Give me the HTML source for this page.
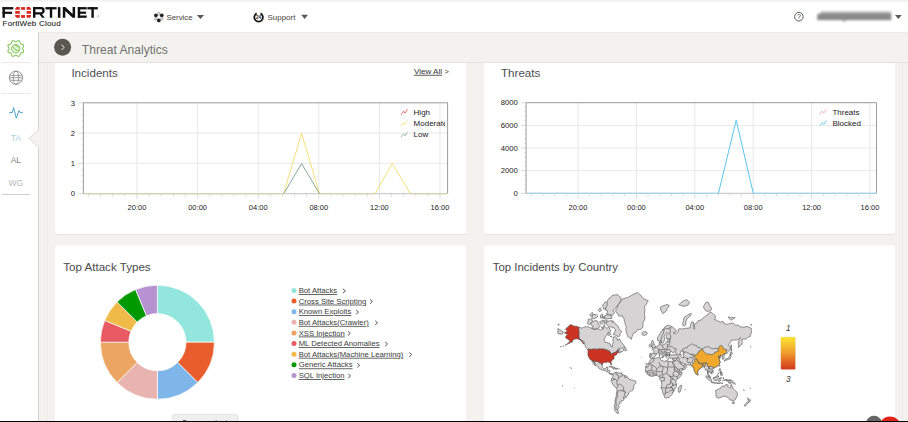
<!DOCTYPE html>
<html><head><meta charset="utf-8"><title>Threat Analytics</title>
<style>html,body{margin:0;padding:0;width:908px;height:422px;overflow:hidden;background:#fff} svg{display:block}</style>
</head><body><svg width="908" height="422" viewBox="0 0 908 422"><defs>
<linearGradient id="hdrsh" x1="0" y1="0" x2="0" y2="1"><stop offset="0" stop-color="#ebeae5"/><stop offset="1" stop-color="#f3f2ee"/></linearGradient>
<linearGradient id="topg" x1="0" y1="0" x2="0" y2="1"><stop offset="0" stop-color="#efefef"/><stop offset="1" stop-color="#ffffff"/></linearGradient>
<linearGradient id="scaleg" x1="0" y1="0" x2="0" y2="1"><stop offset="0" stop-color="#fde633"/><stop offset="0.5" stop-color="#ef9a2c"/><stop offset="1" stop-color="#d2361a"/></linearGradient>
<filter id="blur1" x="-20%" y="-100%" width="140%" height="300%"><feGaussianBlur stdDeviation="0.85"/></filter>
<clipPath id="clip1"><rect x="380" y="95" width="65" height="50"/></clipPath>
<clipPath id="clip2"><rect x="800" y="95" width="76" height="50"/></clipPath>
</defs><rect x="0" y="0" width="908" height="422" fill="#f3f2ee"/><rect x="0" y="0" width="908" height="32" fill="#ffffff"/><rect x="0" y="0" width="908" height="3" fill="url(#topg)"/><rect x="0" y="32" width="38" height="390" fill="#ffffff"/><rect x="38" y="32" width="1" height="390" fill="#d4d3ce"/><rect x="47" y="63" width="1" height="359" fill="#edece7"/><rect x="902" y="63" width="1" height="359" fill="#edece7"/><rect x="55" y="41" width="411" height="194" rx="3" fill="#e6e4de"/><rect x="55" y="40" width="411" height="194" rx="3" fill="#ffffff"/><rect x="484" y="41" width="411" height="194" rx="3" fill="#e6e4de"/><rect x="484" y="40" width="411" height="194" rx="3" fill="#ffffff"/><rect x="55" y="246.5" width="411" height="200" rx="3" fill="#e6e4de"/><rect x="55" y="245.5" width="411" height="200" rx="3" fill="#ffffff"/><rect x="484" y="246.5" width="411" height="200" rx="3" fill="#e6e4de"/><rect x="484" y="245.5" width="411" height="200" rx="3" fill="#ffffff"/><rect x="39" y="32" width="869" height="30" fill="#f3f2ee"/><rect x="39" y="32" width="869" height="2.5" fill="url(#hdrsh)"/><rect x="39" y="62" width="869" height="1" fill="#e3e2dd"/><rect x="2.5" y="7.1" width="2.4" height="10.700000000000001" fill="#111111"/><rect x="2.5" y="7.1" width="10.8" height="2.3" fill="#111111"/><rect x="2.5" y="11.7" width="9.6" height="2.2" fill="#111111"/><path d="M16.5 7.1 H19.8 V9.8 H15.2 V8.4 Z" fill="#da291c"/><rect x="21.1" y="7.1" width="3.90" height="2.70" fill="#da291c"/><path d="M26.6 7.1 H29.7 L31.0 8.4 V9.8 H26.6 Z" fill="#da291c"/><rect x="15.2" y="11.05" width="4.60" height="2.70" fill="#da291c"/><rect x="26.6" y="11.05" width="4.40" height="2.70" fill="#da291c"/><path d="M15.2 15.1 H19.8 V17.8 H16.5 L15.2 16.5 Z" fill="#da291c"/><rect x="21.1" y="15.1" width="3.90" height="2.70" fill="#da291c"/><path d="M26.6 15.1 H31.0 V16.5 L29.7 17.8 H26.6 Z" fill="#da291c"/><path d="M33 7.1 H41.5 Q44.6 7.1 44.6 10.2 V11.3 Q44.6 13.9 42 14.2 L44.8 17.8 H42.1 L39.6 14.4 H35.4 V17.8 H33 Z M35.4 9.3 V12.3 H41 Q42.2 12.3 42.2 11.2 V10.4 Q42.2 9.3 41 9.3 Z" fill="#111111" fill-rule="evenodd"/><rect x="45.4" y="7.1" width="11.2" height="2.3" fill="#111111"/><rect x="49.8" y="7.1" width="2.4" height="10.700000000000001" fill="#111111"/><rect x="57.9" y="7.1" width="2.5" height="10.700000000000001" fill="#111111"/><path d="M62.8 17.8 V7.1 H65.3 L72.6 14 V7.1 H75.1 V17.8 H72.6 L65.3 10.9 V17.8 Z" fill="#111111"/><rect x="77.8" y="7.1" width="2.4" height="10.700000000000001" fill="#111111"/><rect x="77.8" y="7.1" width="8.9" height="2.3" fill="#111111"/><rect x="77.8" y="11.6" width="8.3" height="2.2" fill="#111111"/><rect x="77.8" y="15.5" width="8.9" height="2.3" fill="#111111"/><rect x="87.4" y="7.1" width="10.4" height="2.3" fill="#111111"/><rect x="91.4" y="7.1" width="2.4" height="10.700000000000001" fill="#111111"/><circle cx="98.3" cy="16.2" r="0.9" fill="none" stroke="#888" stroke-width="0.4"/><text x="2.6" y="26.1" style="font-family:'Liberation Sans', sans-serif;font-size:8.0px;letter-spacing:0.2px" fill="#1e1e1e" stroke="#1e1e1e" stroke-width="0.1">FortiWeb Cloud</text><circle cx="158.80" cy="13.60" r="1.2" fill="none" stroke="#8a8a8a" stroke-width="0.8"/><circle cx="161.74" cy="15.30" r="1.85" fill="#222"/><circle cx="161.74" cy="18.70" r="1.2" fill="none" stroke="#8a8a8a" stroke-width="0.8"/><circle cx="158.80" cy="20.40" r="1.85" fill="#222"/><circle cx="155.86" cy="18.70" r="1.2" fill="none" stroke="#8a8a8a" stroke-width="0.8"/><circle cx="155.86" cy="15.30" r="1.85" fill="#222"/><text x="166.4" y="20.2" text-anchor="start" style="font-family:'Liberation Sans', sans-serif;font-size:7.9px;" fill="#48433e">Service</text><path d="M196.8 14.9 H204.1 L200.45 19 Z" fill="#5e5853"/><path d="M256.7 13.4 A4.3 4.3 0 1 0 260.5 13.4" fill="none" stroke="#1a1a1a" stroke-width="1.8"/><text x="258.6" y="18.9" text-anchor="middle" style="font-family:'Liberation Sans',sans-serif;font-size:4.6px;font-weight:bold" fill="#222">24</text><text x="267.4" y="20.2" text-anchor="start" style="font-family:'Liberation Sans', sans-serif;font-size:8.0px;" fill="#48433e">Support</text><path d="M301.2 14.8 H308 L304.6 19 Z" fill="#5e5853"/><circle cx="798.9" cy="16.7" r="4.3" fill="none" stroke="#333" stroke-width="0.8"/><text x="798.9" y="19.3" text-anchor="middle" style="font-family:'Liberation Sans',sans-serif;font-size:7px" fill="#333">?</text><g filter="url(#blur1)"><rect x="817.3" y="13.8" width="74" height="6.4" fill="#8a8a8a"/><rect x="820.5" y="11.6" width="70.5" height="2.4" fill="#a8a8a8"/><rect x="842.5" y="19.5" width="3.5" height="1.8" fill="#999"/></g><path d="M895 14.9 H901.7 L898.35 18.9 Z" fill="#5e5853"/><path d="M15.80 41.70 L15.98 41.68 L16.16 41.64 L16.35 41.57 L16.54 41.47 L16.74 41.36 L16.95 41.24 L17.17 41.11 L17.40 40.98 L17.63 40.87 L17.87 40.77 L18.11 40.70 L18.35 40.66 L18.58 40.65 L18.80 40.67 L19.01 40.74 L19.21 40.84 L19.39 40.98 L19.54 41.15 L19.68 41.35 L19.80 41.57 L19.90 41.81 L19.98 42.06 L20.06 42.31 L20.12 42.55 L20.18 42.79 L20.25 43.01 L20.32 43.21 L20.40 43.40 L20.49 43.55 L20.61 43.69 L20.75 43.81 L20.90 43.90 L21.09 43.98 L21.29 44.05 L21.51 44.12 L21.75 44.18 L21.99 44.24 L22.24 44.32 L22.49 44.40 L22.73 44.50 L22.95 44.62 L23.15 44.76 L23.32 44.91 L23.46 45.09 L23.56 45.29 L23.63 45.50 L23.65 45.72 L23.64 45.95 L23.60 46.19 L23.53 46.43 L23.43 46.67 L23.32 46.90 L23.19 47.13 L23.06 47.35 L22.94 47.56 L22.83 47.76 L22.73 47.95 L22.66 48.14 L22.62 48.32 L22.60 48.50 L22.62 48.68 L22.66 48.86 L22.73 49.05 L22.83 49.24 L22.94 49.44 L23.06 49.65 L23.19 49.87 L23.32 50.10 L23.43 50.33 L23.53 50.57 L23.60 50.81 L23.64 51.05 L23.65 51.28 L23.63 51.50 L23.56 51.71 L23.46 51.91 L23.32 52.09 L23.15 52.24 L22.95 52.38 L22.73 52.50 L22.49 52.60 L22.24 52.68 L21.99 52.76 L21.75 52.82 L21.51 52.88 L21.29 52.95 L21.09 53.02 L20.90 53.10 L20.75 53.19 L20.61 53.31 L20.49 53.45 L20.40 53.60 L20.32 53.79 L20.25 53.99 L20.18 54.21 L20.12 54.45 L20.06 54.69 L19.98 54.94 L19.90 55.19 L19.80 55.43 L19.68 55.65 L19.54 55.85 L19.39 56.02 L19.21 56.16 L19.01 56.26 L18.80 56.33 L18.58 56.35 L18.35 56.34 L18.11 56.30 L17.87 56.23 L17.63 56.13 L17.40 56.02 L17.17 55.89 L16.95 55.76 L16.74 55.64 L16.54 55.53 L16.35 55.43 L16.16 55.36 L15.98 55.32 L15.80 55.30 L15.62 55.32 L15.44 55.36 L15.25 55.43 L15.06 55.53 L14.86 55.64 L14.65 55.76 L14.43 55.89 L14.20 56.02 L13.97 56.13 L13.73 56.23 L13.49 56.30 L13.25 56.34 L13.02 56.35 L12.80 56.33 L12.59 56.26 L12.39 56.16 L12.21 56.02 L12.06 55.85 L11.92 55.65 L11.80 55.43 L11.70 55.19 L11.62 54.94 L11.54 54.69 L11.48 54.45 L11.42 54.21 L11.35 53.99 L11.28 53.79 L11.20 53.60 L11.11 53.45 L10.99 53.31 L10.85 53.19 L10.70 53.10 L10.51 53.02 L10.31 52.95 L10.09 52.88 L9.85 52.82 L9.61 52.76 L9.36 52.68 L9.11 52.60 L8.87 52.50 L8.65 52.38 L8.45 52.24 L8.28 52.09 L8.14 51.91 L8.04 51.71 L7.97 51.50 L7.95 51.28 L7.96 51.05 L8.00 50.81 L8.07 50.57 L8.17 50.33 L8.28 50.10 L8.41 49.87 L8.54 49.65 L8.66 49.44 L8.77 49.24 L8.87 49.05 L8.94 48.86 L8.98 48.68 L9.00 48.50 L8.98 48.32 L8.94 48.14 L8.87 47.95 L8.77 47.76 L8.66 47.56 L8.54 47.35 L8.41 47.13 L8.28 46.90 L8.17 46.67 L8.07 46.43 L8.00 46.19 L7.96 45.95 L7.95 45.72 L7.97 45.50 L8.04 45.29 L8.14 45.09 L8.28 44.91 L8.45 44.76 L8.65 44.62 L8.87 44.50 L9.11 44.40 L9.36 44.32 L9.61 44.24 L9.85 44.18 L10.09 44.12 L10.31 44.05 L10.51 43.98 L10.70 43.90 L10.85 43.81 L10.99 43.69 L11.11 43.55 L11.20 43.40 L11.28 43.21 L11.35 43.01 L11.42 42.79 L11.48 42.55 L11.54 42.31 L11.62 42.06 L11.70 41.81 L11.80 41.57 L11.92 41.35 L12.06 41.15 L12.21 40.98 L12.39 40.84 L12.59 40.74 L12.80 40.67 L13.02 40.65 L13.25 40.66 L13.49 40.70 L13.73 40.77 L13.97 40.87 L14.20 40.98 L14.43 41.11 L14.65 41.24 L14.86 41.36 L15.06 41.47 L15.25 41.57 L15.44 41.64 L15.62 41.68 L15.80 41.70Z" fill="none" stroke="#7dc352" stroke-width="1.05"/><circle cx="15.8" cy="48.7" r="4.2" fill="#e3f2d8" stroke="#7dc352" stroke-width="0.95"/><path d="M12.600000000000001 47.3 Q14.8 48.0 15.8 50.0 Q17.3 51.5 19.3 49.7 M14.8 44.9 Q17.3 46.5 19.400000000000002 47.5" fill="none" stroke="#7dc352" stroke-width="1"/><rect x="1.5" y="62" width="29" height="1" fill="#e8e8e8"/><circle cx="15.95" cy="77.7" r="6.6" fill="none" stroke="#808080" stroke-width="0.85"/><ellipse cx="15.95" cy="77.7" rx="2.8" ry="6.6" fill="none" stroke="#808080" stroke-width="0.75"/><path d="M10.15 75.4 H21.749999999999996 M9.35 77.7 H22.549999999999997 M10.15 80.3 H21.749999999999996" stroke="#808080" stroke-width="0.75" fill="none"/><rect x="1.5" y="93" width="29" height="1" fill="#e8e8e8"/><path d="M9.2 112.6 H12.2 L13.6 107.6 L16.3 118.2 L18.9 110.6 L20.1 112.6 H22.8" fill="none" stroke="#4da3c6" stroke-width="1.0" stroke-linejoin="round"/><text x="15.8" y="141.1" text-anchor="middle" style="font-family:'Liberation Sans', sans-serif;font-size:8.5px;" fill="#a9d3e5">TA</text><text x="15.9" y="163.0" text-anchor="middle" style="font-family:'Liberation Sans', sans-serif;font-size:8.5px;" fill="#858585">AL</text><text x="15.9" y="185.5" text-anchor="middle" style="font-family:'Liberation Sans', sans-serif;font-size:8.5px;" fill="#b8b8b8">WG</text><rect x="1.7" y="194" width="28.5" height="1" fill="#cfcfcf"/><path d="M39 129.6 L29.0 138.4 L39 147.4 Z" fill="#f3f2ee"/><path d="M38.5 129.6 L29.0 138.4 L38.5 147.4" fill="none" stroke="#d4d3ce" stroke-width="0.8"/><circle cx="62.6" cy="47.3" r="8.5" fill="#5b5650"/><path d="M61.5 44.6 L64.1 47.3 L61.5 50" fill="none" stroke="#fff" stroke-width="0.9"/><text x="81.8" y="53.7" text-anchor="start" style="font-family:'Liberation Sans', sans-serif;font-size:12.1px;" fill="#737373">Threat Analytics</text><text x="71.4" y="77.4" text-anchor="start" style="font-family:'Liberation Sans', sans-serif;font-size:11.6px;" fill="#505050">Incidents</text><text x="413.9" y="73.8" text-anchor="start" style="font-family:'Liberation Sans', sans-serif;font-size:8.1px;text-decoration:underline" fill="#333">View All</text><text x="444.6" y="73.8" text-anchor="start" style="font-family:'Liberation Sans', sans-serif;font-size:7.5px;" fill="#333">&gt;</text><rect x="78.4" y="193.10" width="5" height="1" fill="#d8d8d8"/><text x="75.10" y="196.30" text-anchor="end" style="font-family:'Liberation Sans', sans-serif;font-size:7.7px" fill="#222">0</text><rect x="81.4" y="187.05" width="2" height="1" fill="#e0e0e0"/><rect x="81.4" y="180.99" width="2" height="1" fill="#e0e0e0"/><rect x="81.4" y="174.94" width="2" height="1" fill="#e0e0e0"/><rect x="81.4" y="168.89" width="2" height="1" fill="#e0e0e0"/><rect x="83.4" y="162.83" width="364.20000000000005" height="1" fill="#e8e8e8"/><rect x="78.4" y="162.83" width="5" height="1" fill="#d8d8d8"/><text x="75.10" y="166.03" text-anchor="end" style="font-family:'Liberation Sans', sans-serif;font-size:7.7px" fill="#222">1</text><rect x="81.4" y="156.78" width="2" height="1" fill="#e0e0e0"/><rect x="81.4" y="150.73" width="2" height="1" fill="#e0e0e0"/><rect x="81.4" y="144.67" width="2" height="1" fill="#e0e0e0"/><rect x="81.4" y="138.62" width="2" height="1" fill="#e0e0e0"/><rect x="83.4" y="132.57" width="364.20000000000005" height="1" fill="#e8e8e8"/><rect x="78.4" y="132.57" width="5" height="1" fill="#d8d8d8"/><text x="75.10" y="135.77" text-anchor="end" style="font-family:'Liberation Sans', sans-serif;font-size:7.7px" fill="#222">2</text><rect x="81.4" y="126.51" width="2" height="1" fill="#e0e0e0"/><rect x="81.4" y="120.46" width="2" height="1" fill="#e0e0e0"/><rect x="81.4" y="114.41" width="2" height="1" fill="#e0e0e0"/><rect x="81.4" y="108.35" width="2" height="1" fill="#e0e0e0"/><rect x="78.4" y="102.30" width="5" height="1" fill="#d8d8d8"/><text x="75.10" y="105.50" text-anchor="end" style="font-family:'Liberation Sans', sans-serif;font-size:7.7px" fill="#222">3</text><rect x="136.50" y="102.8" width="1" height="90.8" fill="#e8e8e8"/><rect x="136.50" y="193.6" width="1" height="5.5" fill="#dcdcdc"/><text x="137.00" y="209.90" text-anchor="middle" style="font-family:'Liberation Sans', sans-serif;font-size:7.5px" fill="#222">20:00</text><rect x="197.10" y="102.8" width="1" height="90.8" fill="#e8e8e8"/><rect x="197.10" y="193.6" width="1" height="5.5" fill="#dcdcdc"/><text x="197.60" y="209.90" text-anchor="middle" style="font-family:'Liberation Sans', sans-serif;font-size:7.5px" fill="#222">00:00</text><rect x="257.70" y="102.8" width="1" height="90.8" fill="#e8e8e8"/><rect x="257.70" y="193.6" width="1" height="5.5" fill="#dcdcdc"/><text x="258.20" y="209.90" text-anchor="middle" style="font-family:'Liberation Sans', sans-serif;font-size:7.5px" fill="#222">04:00</text><rect x="318.30" y="102.8" width="1" height="90.8" fill="#e8e8e8"/><rect x="318.30" y="193.6" width="1" height="5.5" fill="#dcdcdc"/><text x="318.80" y="209.90" text-anchor="middle" style="font-family:'Liberation Sans', sans-serif;font-size:7.5px" fill="#222">08:00</text><rect x="378.90" y="102.8" width="1" height="90.8" fill="#e8e8e8"/><rect x="378.90" y="193.6" width="1" height="5.5" fill="#dcdcdc"/><text x="379.40" y="209.90" text-anchor="middle" style="font-family:'Liberation Sans', sans-serif;font-size:7.5px" fill="#222">12:00</text><rect x="439.50" y="102.8" width="1" height="90.8" fill="#e8e8e8"/><rect x="439.50" y="193.6" width="1" height="5.5" fill="#dcdcdc"/><text x="440.00" y="209.90" text-anchor="middle" style="font-family:'Liberation Sans', sans-serif;font-size:7.5px" fill="#222">16:00</text><rect x="88.02" y="193.6" width="1" height="3" fill="#dcdcdc"/><rect x="100.14" y="193.6" width="1" height="3" fill="#dcdcdc"/><rect x="112.26" y="193.6" width="1" height="3" fill="#dcdcdc"/><rect x="124.38" y="193.6" width="1" height="3" fill="#dcdcdc"/><rect x="148.62" y="193.6" width="1" height="3" fill="#dcdcdc"/><rect x="160.74" y="193.6" width="1" height="3" fill="#dcdcdc"/><rect x="172.86" y="193.6" width="1" height="3" fill="#dcdcdc"/><rect x="184.98" y="193.6" width="1" height="3" fill="#dcdcdc"/><rect x="209.22" y="193.6" width="1" height="3" fill="#dcdcdc"/><rect x="221.34" y="193.6" width="1" height="3" fill="#dcdcdc"/><rect x="233.46" y="193.6" width="1" height="3" fill="#dcdcdc"/><rect x="245.58" y="193.6" width="1" height="3" fill="#dcdcdc"/><rect x="269.82" y="193.6" width="1" height="3" fill="#dcdcdc"/><rect x="281.94" y="193.6" width="1" height="3" fill="#dcdcdc"/><rect x="294.06" y="193.6" width="1" height="3" fill="#dcdcdc"/><rect x="306.18" y="193.6" width="1" height="3" fill="#dcdcdc"/><rect x="330.42" y="193.6" width="1" height="3" fill="#dcdcdc"/><rect x="342.54" y="193.6" width="1" height="3" fill="#dcdcdc"/><rect x="354.66" y="193.6" width="1" height="3" fill="#dcdcdc"/><rect x="366.78" y="193.6" width="1" height="3" fill="#dcdcdc"/><rect x="391.02" y="193.6" width="1" height="3" fill="#dcdcdc"/><rect x="403.14" y="193.6" width="1" height="3" fill="#dcdcdc"/><rect x="415.26" y="193.6" width="1" height="3" fill="#dcdcdc"/><rect x="427.38" y="193.6" width="1" height="3" fill="#dcdcdc"/><path d="M83.40 193.60 V102.80 H447.60 V193.60" fill="none" stroke="#9a9a9a" stroke-width="1"/><path d="M83.40 193.60 H447.60" fill="none" stroke="#cdcdcd" stroke-width="1.4"/><path d="M83.90 193.60 H283.70" fill="none" stroke="#cfd3b2" stroke-width="1.4"/><path d="M319.50 193.60 H375.00" fill="none" stroke="#cfd3b2" stroke-width="1.4"/><path d="M410.40 193.60 H447.10" fill="none" stroke="#cfd3b2" stroke-width="1.4"/><path d="M283.70 193.60 L301.60 133.30 L319.50 193.60" fill="none" stroke="#f7df7a" stroke-width="1"/><path d="M375.00 193.60 L392.30 163.50 L410.40 193.60" fill="none" stroke="#f7df7a" stroke-width="1"/><path d="M283.70 193.60 L301.60 163.60 L319.50 193.60" fill="none" stroke="#86ab95" stroke-width="1"/><g clip-path="url(#clip1)"><path d="M401.00 114.70 L403.50 111.20 L405.00 113.20 L407.50 109.20" fill="none" stroke="#d9534f" stroke-width="0.8"/><text x="413.60" y="114.60" style="font-family:'Liberation Sans', sans-serif;font-size:8px" fill="#222">High</text><path d="M401.00 126.00 L403.50 122.50 L405.00 124.50 L407.50 120.50" fill="none" stroke="#f7df7a" stroke-width="0.8"/><text x="413.60" y="125.90" style="font-family:'Liberation Sans', sans-serif;font-size:8px" fill="#222">Moderate</text><path d="M401.00 137.30 L403.50 133.80 L405.00 135.80 L407.50 131.80" fill="none" stroke="#86ab95" stroke-width="0.8"/><text x="413.60" y="137.20" style="font-family:'Liberation Sans', sans-serif;font-size:8px" fill="#222">Low</text></g><text x="501" y="77.4" text-anchor="start" style="font-family:'Liberation Sans', sans-serif;font-size:11.6px;" fill="#505050">Threats</text><rect x="521.1" y="192.90" width="5" height="1" fill="#d8d8d8"/><text x="517.80" y="196.10" text-anchor="end" style="font-family:'Liberation Sans', sans-serif;font-size:7.7px" fill="#222">0</text><rect x="524.1" y="188.37" width="2" height="1" fill="#e0e0e0"/><rect x="524.1" y="183.83" width="2" height="1" fill="#e0e0e0"/><rect x="524.1" y="179.30" width="2" height="1" fill="#e0e0e0"/><rect x="524.1" y="174.76" width="2" height="1" fill="#e0e0e0"/><rect x="526.1" y="170.22" width="350.4" height="1" fill="#e8e8e8"/><rect x="521.1" y="170.22" width="5" height="1" fill="#d8d8d8"/><text x="517.80" y="173.42" text-anchor="end" style="font-family:'Liberation Sans', sans-serif;font-size:7.7px" fill="#222">2000</text><rect x="524.1" y="165.69" width="2" height="1" fill="#e0e0e0"/><rect x="524.1" y="161.16" width="2" height="1" fill="#e0e0e0"/><rect x="524.1" y="156.62" width="2" height="1" fill="#e0e0e0"/><rect x="524.1" y="152.08" width="2" height="1" fill="#e0e0e0"/><rect x="526.1" y="147.55" width="350.4" height="1" fill="#e8e8e8"/><rect x="521.1" y="147.55" width="5" height="1" fill="#d8d8d8"/><text x="517.80" y="150.75" text-anchor="end" style="font-family:'Liberation Sans', sans-serif;font-size:7.7px" fill="#222">4000</text><rect x="524.1" y="143.02" width="2" height="1" fill="#e0e0e0"/><rect x="524.1" y="138.48" width="2" height="1" fill="#e0e0e0"/><rect x="524.1" y="133.95" width="2" height="1" fill="#e0e0e0"/><rect x="524.1" y="129.41" width="2" height="1" fill="#e0e0e0"/><rect x="526.1" y="124.88" width="350.4" height="1" fill="#e8e8e8"/><rect x="521.1" y="124.88" width="5" height="1" fill="#d8d8d8"/><text x="517.80" y="128.07" text-anchor="end" style="font-family:'Liberation Sans', sans-serif;font-size:7.7px" fill="#222">6000</text><rect x="524.1" y="120.34" width="2" height="1" fill="#e0e0e0"/><rect x="524.1" y="115.81" width="2" height="1" fill="#e0e0e0"/><rect x="524.1" y="111.27" width="2" height="1" fill="#e0e0e0"/><rect x="524.1" y="106.73" width="2" height="1" fill="#e0e0e0"/><rect x="521.1" y="102.20" width="5" height="1" fill="#d8d8d8"/><text x="517.80" y="105.40" text-anchor="end" style="font-family:'Liberation Sans', sans-serif;font-size:7.7px" fill="#222">8000</text><rect x="577.50" y="102.7" width="1" height="90.7" fill="#e8e8e8"/><rect x="577.50" y="193.4" width="1" height="5.5" fill="#dcdcdc"/><text x="578.00" y="209.70" text-anchor="middle" style="font-family:'Liberation Sans', sans-serif;font-size:7.5px" fill="#222">20:00</text><rect x="635.90" y="102.7" width="1" height="90.7" fill="#e8e8e8"/><rect x="635.90" y="193.4" width="1" height="5.5" fill="#dcdcdc"/><text x="636.40" y="209.70" text-anchor="middle" style="font-family:'Liberation Sans', sans-serif;font-size:7.5px" fill="#222">00:00</text><rect x="694.30" y="102.7" width="1" height="90.7" fill="#e8e8e8"/><rect x="694.30" y="193.4" width="1" height="5.5" fill="#dcdcdc"/><text x="694.80" y="209.70" text-anchor="middle" style="font-family:'Liberation Sans', sans-serif;font-size:7.5px" fill="#222">04:00</text><rect x="752.70" y="102.7" width="1" height="90.7" fill="#e8e8e8"/><rect x="752.70" y="193.4" width="1" height="5.5" fill="#dcdcdc"/><text x="753.20" y="209.70" text-anchor="middle" style="font-family:'Liberation Sans', sans-serif;font-size:7.5px" fill="#222">08:00</text><rect x="811.10" y="102.7" width="1" height="90.7" fill="#e8e8e8"/><rect x="811.10" y="193.4" width="1" height="5.5" fill="#dcdcdc"/><text x="811.60" y="209.70" text-anchor="middle" style="font-family:'Liberation Sans', sans-serif;font-size:7.5px" fill="#222">12:00</text><rect x="869.50" y="102.7" width="1" height="90.7" fill="#e8e8e8"/><rect x="869.50" y="193.4" width="1" height="5.5" fill="#dcdcdc"/><text x="870.00" y="209.70" text-anchor="middle" style="font-family:'Liberation Sans', sans-serif;font-size:7.5px" fill="#222">16:00</text><rect x="530.78" y="193.4" width="1" height="3" fill="#dcdcdc"/><rect x="542.46" y="193.4" width="1" height="3" fill="#dcdcdc"/><rect x="554.14" y="193.4" width="1" height="3" fill="#dcdcdc"/><rect x="565.82" y="193.4" width="1" height="3" fill="#dcdcdc"/><rect x="589.18" y="193.4" width="1" height="3" fill="#dcdcdc"/><rect x="600.86" y="193.4" width="1" height="3" fill="#dcdcdc"/><rect x="612.54" y="193.4" width="1" height="3" fill="#dcdcdc"/><rect x="624.22" y="193.4" width="1" height="3" fill="#dcdcdc"/><rect x="647.58" y="193.4" width="1" height="3" fill="#dcdcdc"/><rect x="659.26" y="193.4" width="1" height="3" fill="#dcdcdc"/><rect x="670.94" y="193.4" width="1" height="3" fill="#dcdcdc"/><rect x="682.62" y="193.4" width="1" height="3" fill="#dcdcdc"/><rect x="705.98" y="193.4" width="1" height="3" fill="#dcdcdc"/><rect x="717.66" y="193.4" width="1" height="3" fill="#dcdcdc"/><rect x="729.34" y="193.4" width="1" height="3" fill="#dcdcdc"/><rect x="741.02" y="193.4" width="1" height="3" fill="#dcdcdc"/><rect x="764.38" y="193.4" width="1" height="3" fill="#dcdcdc"/><rect x="776.06" y="193.4" width="1" height="3" fill="#dcdcdc"/><rect x="787.74" y="193.4" width="1" height="3" fill="#dcdcdc"/><rect x="799.42" y="193.4" width="1" height="3" fill="#dcdcdc"/><rect x="822.78" y="193.4" width="1" height="3" fill="#dcdcdc"/><rect x="834.46" y="193.4" width="1" height="3" fill="#dcdcdc"/><rect x="846.14" y="193.4" width="1" height="3" fill="#dcdcdc"/><rect x="857.82" y="193.4" width="1" height="3" fill="#dcdcdc"/><path d="M526.10 193.40 V102.70 H876.50 V193.40" fill="none" stroke="#9a9a9a" stroke-width="1"/><path d="M526.10 193.40 H876.50" fill="none" stroke="#cdcdcd" stroke-width="1.4"/><path d="M526.60 193.40 H718.40" fill="none" stroke="#9fd5ea" stroke-width="1.4"/><path d="M753.30 193.40 H876.00" fill="none" stroke="#9fd5ea" stroke-width="1.4"/><path d="M718.40 193.40 L736.20 120.20 L753.30 193.40" fill="none" stroke="#5bc5ec" stroke-width="1"/><g clip-path="url(#clip2)"><path d="M819.80 114.60 L822.30 111.10 L823.80 113.10 L826.30 109.10" fill="none" stroke="#f4a3a3" stroke-width="0.8"/><text x="832.40" y="114.50" style="font-family:'Liberation Sans', sans-serif;font-size:8px" fill="#222">Threats</text><path d="M819.80 125.90 L822.30 122.40 L823.80 124.40 L826.30 120.40" fill="none" stroke="#5bc5ec" stroke-width="0.8"/><text x="832.40" y="125.80" style="font-family:'Liberation Sans', sans-serif;font-size:8px" fill="#222">Blocked</text></g><text x="63.2" y="271.0" text-anchor="start" style="font-family:'Liberation Sans', sans-serif;font-size:11.6px;" fill="#4a4a4a">Top Attack Types</text><path d="M157.40 285.20 A57.0 57.0 0 0 1 214.40 342.20 L186.00 342.20 A28.6 28.6 0 0 0 157.40 313.60Z" fill="#93e6de" stroke="#fff" stroke-width="0.7"/><path d="M214.40 342.20 A57.0 57.0 0 0 1 197.71 382.51 L177.62 362.42 A28.6 28.6 0 0 0 186.00 342.20Z" fill="#e85d2b" stroke="#fff" stroke-width="0.7"/><path d="M197.71 382.51 A57.0 57.0 0 0 1 157.40 399.20 L157.40 370.80 A28.6 28.6 0 0 0 177.62 362.42Z" fill="#7eb6ea" stroke="#fff" stroke-width="0.7"/><path d="M157.40 399.20 A57.0 57.0 0 0 1 117.09 382.51 L137.18 362.42 A28.6 28.6 0 0 0 157.40 370.80Z" fill="#e9b3b0" stroke="#fff" stroke-width="0.7"/><path d="M117.09 382.51 A57.0 57.0 0 0 1 100.40 342.20 L128.80 342.20 A28.6 28.6 0 0 0 137.18 362.42Z" fill="#eca562" stroke="#fff" stroke-width="0.7"/><path d="M100.40 342.20 A57.0 57.0 0 0 1 104.74 320.39 L130.98 331.26 A28.6 28.6 0 0 0 128.80 342.20Z" fill="#e85b63" stroke="#fff" stroke-width="0.7"/><path d="M104.74 320.39 A57.0 57.0 0 0 1 117.09 301.89 L137.18 321.98 A28.6 28.6 0 0 0 130.98 331.26Z" fill="#f0ba49" stroke="#fff" stroke-width="0.7"/><path d="M117.09 301.89 A57.0 57.0 0 0 1 135.59 289.54 L146.46 315.78 A28.6 28.6 0 0 0 137.18 321.98Z" fill="#009a00" stroke="#fff" stroke-width="0.7"/><path d="M135.59 289.54 A57.0 57.0 0 0 1 157.40 285.20 L157.40 313.60 A28.6 28.6 0 0 0 146.46 315.78Z" fill="#b792d1" stroke="#fff" stroke-width="0.7"/><circle cx="294" cy="290.40" r="2.5" fill="#93e6de"/><text x="298.7" y="293.00" style="font-family:'Liberation Sans', sans-serif;font-size:7.7px;text-decoration:underline" fill="#3a3a3a">Bot Attacks</text><path d="M343.00 288.80 L345.40 290.90 L343.00 293.00" fill="none" stroke="#444" stroke-width="0.9"/><circle cx="294" cy="301.03" r="2.5" fill="#e85d2b"/><text x="298.7" y="303.63" style="font-family:'Liberation Sans', sans-serif;font-size:7.7px;text-decoration:underline" fill="#3a3a3a">Cross Site Scripting</text><path d="M370.00 299.43 L372.40 301.53 L370.00 303.63" fill="none" stroke="#444" stroke-width="0.9"/><circle cx="294" cy="311.66" r="2.5" fill="#7eb6ea"/><text x="298.7" y="314.26" style="font-family:'Liberation Sans', sans-serif;font-size:7.7px;text-decoration:underline" fill="#3a3a3a">Known Exploits</text><path d="M356.10 310.06 L358.50 312.16 L356.10 314.26" fill="none" stroke="#444" stroke-width="0.9"/><circle cx="294" cy="322.29" r="2.5" fill="#e9b3b0"/><text x="298.7" y="324.89" style="font-family:'Liberation Sans', sans-serif;font-size:7.7px;text-decoration:underline" fill="#3a3a3a">Bot Attacks(Crawler)</text><path d="M375.20 320.69 L377.60 322.79 L375.20 324.89" fill="none" stroke="#444" stroke-width="0.9"/><circle cx="294" cy="332.92" r="2.5" fill="#eca562"/><text x="298.7" y="335.52" style="font-family:'Liberation Sans', sans-serif;font-size:7.7px;text-decoration:underline" fill="#3a3a3a">XSS Injection</text><path d="M347.90 331.32 L350.30 333.42 L347.90 335.52" fill="none" stroke="#444" stroke-width="0.9"/><circle cx="294" cy="343.55" r="2.5" fill="#e85b63"/><text x="298.7" y="346.15" style="font-family:'Liberation Sans', sans-serif;font-size:7.7px;text-decoration:underline" fill="#3a3a3a">ML Detected Anomalies</text><path d="M385.10 341.95 L387.50 344.05 L385.10 346.15" fill="none" stroke="#444" stroke-width="0.9"/><circle cx="294" cy="354.18" r="2.5" fill="#f0ba49"/><text x="298.7" y="356.78" style="font-family:'Liberation Sans', sans-serif;font-size:7.7px;text-decoration:underline" fill="#3a3a3a">Bot Attacks(Machine Learning)</text><path d="M409.30 352.58 L411.70 354.68 L409.30 356.78" fill="none" stroke="#444" stroke-width="0.9"/><circle cx="294" cy="364.81" r="2.5" fill="#009a00"/><text x="298.7" y="367.41" style="font-family:'Liberation Sans', sans-serif;font-size:7.7px;text-decoration:underline" fill="#3a3a3a">Generic Attacks</text><path d="M357.20 363.21 L359.60 365.31 L357.20 367.41" fill="none" stroke="#444" stroke-width="0.9"/><circle cx="294" cy="375.44" r="2.5" fill="#b792d1"/><text x="298.7" y="378.04" style="font-family:'Liberation Sans', sans-serif;font-size:7.7px;text-decoration:underline" fill="#3a3a3a">SQL Injection</text><path d="M348.20 373.84 L350.60 375.94 L348.20 378.04" fill="none" stroke="#444" stroke-width="0.9"/><rect x="172.4" y="414.3" width="65.5" height="12" rx="3" fill="#efefef" stroke="#dcdcdc" stroke-width="0.8"/><rect x="183" y="420" width="3.2" height="1" fill="#666"/><rect x="215.3" y="420.3" width="1.7" height="0.7" fill="#888"/><rect x="225.9" y="420.2" width="1" height="0.8" fill="#777"/><text x="492.7" y="271.2" text-anchor="start" style="font-family:'Liberation Sans', sans-serif;font-size:11.4px;" fill="#4a4a4a">Top Incidents by Country</text><g stroke="#4d4d4d" stroke-width="0.6" stroke-linejoin="round"><path d="M578.98 327.28L581.67 328.17L583.52 327.35L585.43 326.68L587.63 326.76L589.72 327.43L591.54 328.50L593.48 329.31L595.12 329.30L596.70 328.89L598.70 329.06L600.46 330.01L603.15 328.89L603.48 326.55L604.22 324.30L605.09 326.35L606.37 328.17L609.06 327.43L610.08 329.44L610.67 331.62L608.52 333.53L606.91 334.98L605.86 336.34L604.92 337.78L603.95 339.20L605.03 342.20L607.18 342.67L608.91 343.08L610.40 344.07L610.67 346.02L612.28 347.12L612.55 344.52L613.35 342.20L612.81 340.43L613.18 338.75L613.08 337.04L615.23 336.71L617.11 338.14L617.38 340.23L619.80 338.99L620.33 340.73L621.67 342.67L623.01 344.16L624.09 345.84L624.63 347.12L622.48 348.20L620.73 348.38L618.99 348.20L617.86 349.61L616.57 350.88L619.26 349.16L620.06 349.56L619.80 350.73L621.94 351.63L622.48 351.33L620.60 352.60L619.26 353.11L618.72 352.38L618.29 350.73L617.54 350.42L616.30 352.23L614.59 352.23L613.89 352.96L612.28 353.47L610.40 354.39L610.40 352.01L609.32 351.11L606.64 349.95L603.69 349.16L602.01 349.23L600.34 349.08L598.67 349.23L597.00 349.10L595.33 349.01L593.66 349.36L591.99 349.57L590.32 349.14L588.65 349.16L587.74 349.64L585.96 347.70L585.15 346.20L584.89 344.52L584.89 343.61L584.16 342.12L583.28 340.73L580.86 340.02L580.06 338.88L578.98 338.88L578.74 337.22L578.98 335.57L578.61 333.91L578.68 332.25L578.64 330.60L578.79 328.94L578.98 327.28Z" fill="#d5d3d3"/><path d="M615.50 311.20L616.22 309.40L617.26 307.75L617.66 305.80L618.72 304.17L619.83 302.34L621.49 300.91L622.48 299.00L624.13 298.47L625.82 298.05L627.46 297.49L629.01 296.70L630.54 295.84L632.24 294.89L633.95 293.93L635.86 293.37L637.52 292.31L638.72 293.73L640.36 294.73L641.54 296.17L642.73 297.60L643.96 299.00L646.13 299.85L648.26 300.82L647.16 302.44L646.43 304.29L645.03 305.71L644.46 307.65L645.07 309.68L644.50 311.63L644.50 313.61L644.73 315.78L645.03 317.93L644.52 319.86L643.45 321.56L642.89 323.47L643.09 325.07L642.89 326.68L642.09 328.16L640.74 329.17L639.15 329.55L637.52 329.59L635.91 332.27L633.22 333.53L632.15 336.48L631.34 339.40L630.00 338.14L628.39 337.04L627.49 335.33L626.78 333.53L625.97 330.96L625.92 328.81L626.24 326.68L625.17 324.30L624.91 322.49L624.29 320.75L624.09 318.93L622.95 317.56L622.48 315.85L620.60 316.12L618.72 315.85L617.74 314.23L616.70 312.66L615.50 311.20Z" fill="#d5d3d3"/><path d="M641.81 332.90L642.89 331.75L644.50 331.86L646.11 331.62L647.45 333.28L646.65 334.38L644.50 335.45L642.62 334.98L641.81 332.90Z" fill="#d5d3d3"/><path d="M591.82 360.64L593.05 360.64L595.09 361.38L596.60 361.38L597.51 361.07L598.48 362.16L599.39 362.76L600.25 362.29L601.48 364.30L602.50 364.59L602.18 366.54L602.50 367.66L603.42 368.60L603.95 368.93L605.56 368.77L606.10 367.38L607.98 367.10L607.71 368.88L607.28 370.13L608.52 370.19L609.59 370.41L609.97 370.73L609.81 372.82L610.77 373.88L612.01 373.62L613.14 374.04L612.87 374.83L611.47 374.78L609.86 374.20L608.68 373.35L607.71 371.75L605.83 371.27L604.22 370.13L602.88 370.30L600.46 369.32L598.05 367.66L598.21 366.93L597.24 365.80L595.95 364.71L594.45 362.76L593.11 361.13L594.29 362.76L594.77 364.31L595.63 365.68L595.95 366.14L594.56 365.22L593.21 363.36L591.82 360.64Z" fill="#d5d3d3"/><path d="M613.14 374.04L614.16 372.98L616.04 372.07L617.11 372.55L618.72 372.98L621.14 372.98L622.48 374.14L624.09 375.46L626.78 375.99L627.85 377.66L628.92 379.12L631.07 379.91L633.76 380.43L635.91 381.48L635.91 383.32L633.86 385.45L633.65 388.05L632.68 390.38L630.80 391.12L628.66 392.67L628.49 394.14L626.78 396.25L625.70 397.82L623.82 397.82L623.39 396.87L624.09 399.10L623.66 400.21L621.41 400.75L621.24 401.97L619.80 402.11L620.06 403.16L618.45 405.72L619.37 407.01L617.65 409.25L617.92 410.93L618.56 413.13L617.11 413.32L616.04 411.79L614.69 410.50L614.63 408.46L614.16 406.47L614.76 404.66L615.23 402.81L614.97 401.12L615.23 399.42L615.61 397.79L616.30 396.25L616.30 393.84L616.84 391.23L616.95 388.32L614.43 386.69L613.73 385.72L612.75 384.19L612.01 382.53L611.10 381.48L611.58 380.38L611.26 379.12L611.74 378.13L612.33 377.66L613.08 376.51L613.19 375.20L612.87 374.83L613.14 374.04Z" fill="#d5d3d3"/><path d="M651.53 358.55L654.16 358.62L656.31 357.91L658.19 357.77L660.07 357.58L660.61 357.91L660.34 359.38L660.88 360.26L662.92 360.76L664.90 361.98L665.44 361.56L665.44 360.64L667.05 360.58L668.12 361.13L670.27 361.62L672.05 361.38L673.07 361.38L673.39 362.47L672.21 362.23L672.87 364.00L673.76 365.68L674.68 367.38L675.37 369.04L676.02 370.57L677.52 371.91L677.95 372.39L678.60 373.14L680.29 372.53L682.09 372.34L682.25 373.14L681.01 375.46L679.40 377.56L677.25 379.12L676.29 380.17L675.80 381.74L675.91 382.79L676.45 384.11L676.45 386.52L675.49 387.96L674.47 389.36L673.76 390.95L673.76 391.80L672.37 392.67L672.10 394.44L670.81 395.82L669.47 397.06L668.39 397.50L666.51 397.63L665.44 398.01L664.58 397.56L664.37 396.25L663.56 394.14L662.86 393.25L662.43 390.66L661.04 387.88L661.31 385.72L661.95 384.38L661.25 381.74L660.98 380.53L659.53 379.12L659.96 377.29L659.80 376.51L659.26 376.25L657.92 376.35L657.12 375.30L655.51 375.41L653.63 376.09L650.67 376.30L649.60 375.62L647.99 374.72L647.45 373.62L646.65 372.82L645.73 372.07L645.30 370.84L645.84 368.21L645.57 367.38L646.11 365.80L646.91 364.47L647.72 363.60L649.33 362.65L649.49 361.74L650.14 360.14L651.05 359.70L651.53 358.55Z" fill="#d5d3d3"/><path d="M681.17 384.91L681.82 386.79L681.28 387.88L680.61 389.91L680.05 391.98L678.97 392.38L678.17 391.23L678.33 389.26L678.54 387.34L679.56 386.96L680.48 385.72L681.17 384.91Z" fill="#d5d3d3"/><path d="M651.69 358.43L649.87 357.78L649.60 356.45L649.87 353.68L651.80 353.50L653.73 353.39L654.06 351.48L652.23 349.56L654.01 348.80L655.56 347.62L657.12 346.27L659.26 345.32L659.10 342.20L660.34 341.62L660.53 343.24L660.55 344.88L662.22 345.05L664.63 344.34L665.98 342.20L667.75 342.00L667.32 339.92L668.91 339.47L670.54 339.20L668.56 338.67L666.51 338.67L666.25 335.91L667.15 334.56L668.29 333.40L666.51 332.52L665.38 334.54L664.10 336.48L664.90 339.40L663.56 342.20L662.22 343.61L661.57 342.67L660.61 340.33L659.00 341.13L657.65 340.43L657.38 337.59L659.00 335.33L659.98 333.59L660.99 331.87L662.22 330.28L663.70 328.59L664.90 326.68L666.48 325.82L668.12 325.11L669.77 325.65L671.35 326.37L672.77 327.15L674.03 328.17L675.08 329.74L676.72 330.69L675.64 332.27L673.23 332.90L674.84 334.14L676.72 333.23L678.33 331.88L678.33 329.17L679.90 328.63L681.56 329.04L683.16 328.75L685.85 328.31L688.01 328.17L690.14 327.73L690.68 324.63L691.75 321.73L693.63 322.43L693.39 324.44L693.75 326.46L693.36 328.46L694.71 329.17L694.71 327.53L694.51 325.91L694.17 324.30L695.58 323.41L697.12 322.78L698.20 320.64L699.78 320.16L701.42 319.89L702.60 318.27L704.23 317.14L705.72 315.85L707.64 314.88L708.84 312.98L710.71 311.94L712.26 313.25L713.89 314.46L715.38 315.85L715.13 317.87L714.84 319.89L716.61 320.14L718.07 321.19L720.75 322.08L722.90 321.19L723.97 323.80L726.66 324.30L728.40 324.08L729.88 323.13L731.49 323.23L733.10 323.13L735.25 325.11L736.87 324.99L738.47 325.27L740.62 326.98L742.25 326.91L743.84 327.28L745.99 326.68L747.68 326.57L749.21 327.28L751.36 328.31L751.16 330.05L751.50 331.79L751.36 333.53L750.29 334.14L750.29 336.48L748.67 337.09L747.18 337.91L745.99 339.20L744.11 339.02L742.23 339.20L742.01 341.17L742.23 343.14L741.41 344.88L739.62 345.85L738.74 347.54L738.68 345.60L738.30 343.67L738.47 341.71L739.56 339.66L740.62 337.59L739.25 338.62L737.94 339.71L736.33 340.04L734.72 340.05L733.11 340.24L731.49 339.92L730.69 341.77L729.47 343.36L728.27 344.96L730.15 346.70L730.15 349.56L728.54 351.34L727.20 353.32L725.32 353.82L724.24 355.09L723.95 356.76L724.24 358.43L722.63 359.38L722.36 357.45L721.83 355.98L719.95 355.16L720.21 356.45L717.96 356.45L718.60 357.65L720.48 357.78L718.87 359.07L719.68 360.95L720.21 362.16L718.87 364.53L717.26 366.37L715.61 366.76L714.04 367.38L712.70 367.10L711.89 367.94L713.23 370.68L713.23 372.55L711.09 374.09L710.98 373.14L708.67 371.48L707.97 373.35L708.56 374.94L710.23 376.61L710.66 377.92L708.94 377.29L708.44 375.73L707.49 374.41L707.59 371.75L707.06 369.86L705.34 370.13L705.18 368.21L704.10 367.10L702.49 366.82L701.15 367.94L699.60 369.32L697.82 370.41L697.66 373.09L696.32 374.41L695.51 373.35L694.97 371.69L694.17 370.13L693.79 367.38L692.29 366.54L691.48 365.97L690.41 364.88L687.73 364.99L685.47 364.65L684.99 363.89L682.36 363.42L681.60 362.10L680.48 362.16L681.55 364.24L682.25 365.40L683.70 365.57L684.93 364.36L686.81 366.54L685.74 368.49L684.24 369.59L682.62 370.13L680.92 371.35L678.87 371.75L677.90 371.65L677.58 370.13L676.81 368.49L675.64 367.10L674.53 365.32L673.76 363.36L673.23 363.36L672.21 362.23L673.07 361.38L673.76 359.83L674.03 358.10L672.15 358.36L669.36 357.97L668.77 356.11L670.17 355.09L668.66 355.23L667.05 355.57L666.84 357.78L665.98 356.79L665.17 354.53L663.02 352.96L662.00 351.86L661.31 352.52L663.29 354.74L664.63 355.64L663.29 357.12L663.13 355.77L661.14 354.53L660.07 352.96L658.73 353.11L656.36 353.61L656.42 354.46L654.70 356.45L654.27 357.38L653.52 357.97L651.69 358.43Z" fill="#d5d3d3"/><path d="M558.04 328.31L559.13 329.65L560.73 330.28L563.41 332.01L562.34 334.14L560.17 333.97L558.04 333.53L557.72 331.79L557.98 330.05L558.04 328.31Z" fill="#d5d3d3"/><path d="M713.02 368.38L714.04 367.88L714.31 368.16L713.56 368.93L713.02 368.38Z" fill="#d5d3d3"/><path d="M611.47 320.45L613.89 322.43L615.42 323.58L616.57 325.11L618.18 326.22L618.72 328.17L619.82 329.91L621.41 331.22L621.51 332.27L619.80 334.14L619.80 336.03L618.18 336.71L616.04 335.33L613.08 334.26L614.69 332.27L615.50 329.59L613.89 327.73L611.74 327.13L609.59 326.68L607.44 325.43L606.37 323.80L607.18 320.82L609.06 321.19L611.47 320.45Z" fill="#d5d3d3"/><path d="M590.80 324.79L591.33 321.73L593.05 321.66L594.56 320.82L596.21 320.61L597.78 321.19L598.01 322.79L598.58 324.30L600.46 325.90L598.32 328.17L596.70 328.75L594.02 328.89L591.60 327.73L593.48 326.37L591.33 325.43L590.80 324.79Z" fill="#d5d3d3"/><path d="M587.31 323.47L588.11 321.47L588.11 319.32L590.26 318.93L592.68 320.82L591.60 322.61L589.19 324.63L587.31 323.47Z" fill="#d5d3d3"/><path d="M606.10 304.17L607.13 302.86L607.15 301.13L607.98 299.74L609.08 298.29L610.72 297.37L611.74 295.84L613.44 295.04L615.28 294.83L617.11 294.57L618.63 295.54L619.90 296.85L621.41 297.86L620.62 299.62L620.33 301.52L619.36 303.00L618.35 304.44L617.11 305.71L615.50 308.02L614.32 309.42L612.81 310.43L614.43 312.43L613.66 314.05L612.28 315.19L609.59 314.97L606.91 314.75L607.07 312.71L607.44 310.69L605.30 309.91L605.59 308.00L605.59 306.05L606.10 304.17Z" fill="#d5d3d3"/><path d="M602.61 305.10L604.05 303.38L605.30 301.52L607.18 303.85L607.05 305.51L606.14 306.96L605.83 308.58L603.69 309.12L603.08 307.13L602.61 305.10Z" fill="#d5d3d3"/><path d="M605.03 315.41L607.98 314.52L609.78 315.30L611.74 315.41L611.74 318.53L609.57 318.50L607.44 318.93L605.30 318.34L604.49 316.91L605.03 315.41Z" fill="#d5d3d3"/><path d="M603.69 320.27L606.37 319.89L606.10 322.95L604.22 323.30L603.69 320.27Z" fill="#d5d3d3"/><path d="M599.66 321.73L601.30 321.08L602.61 319.89L603.15 322.61L601.54 324.30L600.19 323.47L599.66 321.73Z" fill="#d5d3d3"/><path d="M600.46 315.19L602.61 314.07L602.55 316.00L602.61 317.93L600.46 317.93L600.46 315.19Z" fill="#d5d3d3"/><path d="M602.88 316.91L604.49 316.28L604.49 318.53L603.15 318.34L602.88 316.91Z" fill="#d5d3d3"/><path d="M591.87 315.19L593.81 314.83L595.63 314.07L596.77 315.25L598.05 316.28L595.63 318.14L593.68 318.85L591.60 318.93L592.16 317.09L591.87 315.19Z" fill="#d5d3d3"/><path d="M589.72 314.75L590.94 313.44L592.41 312.43L593.21 314.75L590.80 316.28L589.72 314.75Z" fill="#d5d3d3"/><path d="M598.32 309.65L600.46 307.74L601.54 310.43L599.39 311.69L598.32 309.65Z" fill="#d5d3d3"/><path d="M608.25 332.01L609.50 333.19L610.93 334.14L608.79 335.68L607.71 334.50L608.25 332.01Z" fill="#d5d3d3"/><path d="M601.27 327.28L603.15 327.43L602.61 328.89L601.27 327.28Z" fill="#d5d3d3"/><path d="M611.74 321.37L613.35 321.01L612.81 322.43L611.74 321.37Z" fill="#d5d3d3"/><path d="M610.13 336.48L611.74 337.04L611.20 336.03L610.13 336.48Z" fill="#d5d3d3"/><path d="M609.06 366.87L610.67 366.14L613.35 366.93L614.85 367.83L613.08 368.05L611.20 367.04L609.06 366.87Z" fill="#d5d3d3"/><path d="M614.75 368.05L616.37 368.19L617.92 368.71L616.30 369.26L614.75 368.93L614.75 368.05Z" fill="#d5d3d3"/><path d="M612.65 368.82L613.78 368.93L613.35 369.21L612.65 368.82Z" fill="#d5d3d3"/><path d="M618.61 368.77L619.47 368.88L619.26 369.10L618.61 368.77Z" fill="#d5d3d3"/><path d="M651.64 348.28L653.09 347.87L655.45 347.37L655.61 346.10L654.81 345.41L653.84 343.51L653.63 341.62L652.93 340.63L652.02 340.63L651.37 342.39L652.02 344.07L653.09 344.70L652.28 345.58L651.91 346.87L652.93 347.21L651.64 348.28Z" fill="#d5d3d3"/><path d="M651.48 346.53L651.37 344.52L650.30 343.88L649.33 344.96L649.33 346.87L650.40 347.04L651.48 346.53Z" fill="#d5d3d3"/><path d="M724.51 361.44L724.78 359.70L726.12 358.75L727.73 358.55L728.27 357.78L729.88 355.77L729.88 354.81L730.74 354.95L730.95 356.45L730.42 358.43L729.88 359.07L728.27 359.38L727.20 360.01L725.58 360.01L724.51 361.44Z" fill="#d5d3d3"/><path d="M729.88 354.74L730.69 351.93L732.83 353.47L731.49 354.39L729.88 354.74Z" fill="#d5d3d3"/><path d="M730.95 351.48L731.76 350.88L731.22 349.22L731.25 347.54L731.49 345.84L731.06 344.70L730.85 347.54L731.30 349.50L730.95 351.48Z" fill="#d5d3d3"/><path d="M719.25 366.54L720.16 365.05L719.68 365.05L719.14 365.97L719.25 366.54Z" fill="#d5d3d3"/><path d="M697.61 375.46L698.63 374.67L697.77 373.46L697.50 374.41L697.61 375.46Z" fill="#d5d3d3"/><path d="M719.41 368.77L720.38 368.71L720.48 369.59L720.11 370.41L721.40 371.48L720.75 371.86L719.68 371.32L719.41 370.95L719.03 370.03L719.41 368.77Z" fill="#d5d3d3"/><path d="M721.18 372.02L722.25 372.71L721.83 373.35L721.29 373.09L721.18 372.02Z" fill="#d5d3d3"/><path d="M720.16 372.34L720.86 372.82L720.48 373.19L720.16 373.09L720.16 372.34Z" fill="#d5d3d3"/><path d="M720.48 372.93L721.02 373.09L720.86 373.83L720.43 373.46L720.48 372.93Z" fill="#d5d3d3"/><path d="M717.64 374.20L718.93 372.66L718.76 373.30L717.96 374.30L717.64 374.20Z" fill="#d5d3d3"/><path d="M720.21 374.94L721.56 375.41L722.47 375.30L722.63 374.41L722.09 373.46L721.02 374.09L720.38 374.41L720.21 374.94Z" fill="#d5d3d3"/><path d="M721.40 382.95L723.06 383.00L721.83 383.58L721.40 382.95Z" fill="#d5d3d3"/><path d="M716.46 382.90L716.99 383.00L718.60 383.11L720.75 383.00L719.14 383.43L716.99 383.27L716.46 382.90Z" fill="#d5d3d3"/><path d="M723.17 377.82L723.70 377.45L723.44 378.60L723.81 378.91L723.27 378.76L723.17 377.82Z" fill="#d5d3d3"/><path d="M723.44 380.17L724.94 380.32L724.51 380.53L723.44 380.43L723.44 380.17Z" fill="#d5d3d3"/><path d="M722.42 380.22L723.01 380.27L722.79 380.59L722.42 380.22Z" fill="#d5d3d3"/><path d="M705.88 375.67L707.33 376.51L708.93 377.20L710.44 378.08L711.62 380.17L711.62 381.63L708.94 379.91L707.20 378.74L705.98 377.03L705.88 375.67Z" fill="#d5d3d3"/><path d="M711.19 382.16L712.89 381.98L714.51 382.66L716.19 382.69L716.19 383.16L713.88 383.06L711.62 382.58L711.19 382.16Z" fill="#d5d3d3"/><path d="M713.23 377.66L713.50 379.12L714.04 380.17L715.92 380.43L717.15 380.59L717.26 379.12L718.07 378.08L718.60 375.99L717.53 374.94L716.72 375.99L715.38 376.93L714.31 377.56L713.23 377.66Z" fill="#d5d3d3"/><path d="M718.60 381.48L718.94 379.76L719.41 378.08L721.83 377.82L719.68 378.34L720.75 380.69L719.41 381.48L718.60 381.48Z" fill="#d5d3d3"/><path d="M725.05 379.38L727.20 380.32L728.82 380.26L730.42 379.96L732.83 381.11L733.88 382.88L735.52 384.11L733.64 383.85L732.03 382.53L730.42 383.32L728.54 382.95L728.81 382.00L727.39 381.20L725.85 380.69L725.05 379.38Z" fill="#d5d3d3"/><path d="M715.60 390.38L715.92 392.96L715.88 395.11L716.46 397.19L718.07 398.13L721.02 397.44L722.41 396.54L723.97 396.01L726.66 396.75L728.81 398.45L729.88 399.95L732.03 400.28L733.37 400.75L735.25 399.75L736.10 397.95L737.13 396.25L737.45 394.32L737.13 392.38L734.98 390.38L733.10 388.43L732.67 386.42L731.76 385.98L731.22 384.22L730.69 385.45L730.69 387.61L729.61 387.88L727.73 386.63L728.27 384.91L726.12 384.54L724.78 385.18L724.24 386.52L722.36 385.98L720.21 387.88L719.68 388.99L717.53 389.65L715.60 390.38Z" fill="#d5d3d3"/><path d="M732.35 401.91L734.34 402.04L734.12 403.66L733.10 403.95L732.35 401.91Z" fill="#d5d3d3"/><path d="M747.44 397.82L749.21 399.75L750.55 399.88L749.96 401.45L748.68 402.53L748.46 401.09L748.03 399.43L747.44 397.82Z" fill="#d5d3d3"/><path d="M747.44 401.77L748.30 402.60L746.63 404.53L745.45 406.25L744.11 405.72L745.18 404.09L746.34 402.95L747.44 401.77Z" fill="#d5d3d3"/><path d="M660.61 309.91L660.61 306.89L663.29 305.71L665.19 305.14L667.05 304.48L669.20 305.41L668.57 307.17L667.22 308.58L666.78 310.43L664.90 312.18L662.75 313.61L661.81 311.69L660.61 309.91Z" fill="#d5d3d3"/><path d="M750.55 324.79L751.36 324.30L751.36 325.27L750.55 324.79Z" fill="#d5d3d3"/><path d="M558.04 324.30L559.38 324.30L558.04 325.27L558.04 324.30Z" fill="#d5d3d3"/><path d="M703.57 306.30L704.61 304.40L705.72 302.54L707.86 301.87L708.84 303.29L709.29 305.04L710.55 306.30L711.62 309.12L710.54 310.49L708.94 311.20L707.26 311.38L705.72 310.69L704.10 308.58L703.57 306.30Z" fill="#d5d3d3"/><path d="M682.36 324.30L683.12 322.34L683.43 320.27L683.75 318.45L684.77 316.91L687.46 315.19L689.31 313.99L691.48 313.61L690.14 315.85L688.45 317.31L686.92 318.93L685.85 321.73L685.98 323.44L685.58 325.11L684.24 325.90L683.16 325.59L682.36 324.30Z" fill="#d5d3d3"/><path d="M728.27 316.91L730.00 317.26L731.73 317.51L733.48 317.63L735.25 317.53L733.88 318.54L732.44 319.44L730.95 320.27L729.45 318.72L728.27 316.91Z" fill="#d5d3d3"/><path d="M678.87 304.79L681.01 302.54L682.61 301.48L684.24 300.47L686.92 299.74L688.32 301.09L689.61 302.54L687.99 305.10L686.43 305.71L684.77 306.01L683.12 306.27L681.55 305.71L678.87 304.79Z" fill="#d5d3d3"/><path d="M621.67 373.35L622.00 372.93L621.46 372.93L621.67 373.35Z" fill="#d5d3d3"/><path d="M565.29 345.41L566.10 344.79L565.02 344.96L565.29 345.41Z" fill="#d5d3d3"/><path d="M562.87 346.45L563.68 346.02L563.14 345.93L562.87 346.45Z" fill="#d5d3d3"/><path d="M560.46 346.87L561.26 346.62L560.19 346.53L560.46 346.87Z" fill="#d5d3d3"/><path d="M750.02 346.87L750.82 347.12L750.29 346.62L750.02 346.87Z" fill="#d5d3d3"/><path d="M572.27 342.20L572.97 341.32L571.68 341.32L572.27 342.20Z" fill="#d5d3d3"/><path d="M622.86 350.26L623.93 348.68L624.90 347.04L626.01 348.53L626.45 350.34L625.97 351.03L624.63 350.26L622.86 350.26Z" fill="#d5d3d3"/><path d="M570.98 368.49L571.57 368.21L570.98 367.83L570.98 368.49Z" fill="#d5d3d3"/><path d="M569.69 367.21L570.07 367.21L569.85 366.99L569.69 367.21Z" fill="#d5d3d3"/><path d="M611.47 378.86L611.74 378.76L611.58 378.60L611.47 378.86Z" fill="#d5d3d3"/><path d="M750.29 387.88L750.61 388.27L749.91 388.16L750.29 387.88Z" fill="#d5d3d3"/><path d="M743.84 389.82L744.38 390.38L743.31 390.10L743.84 389.82Z" fill="#d5d3d3"/><path d="M574.31 387.88L574.58 388.05L574.36 388.10L574.31 387.88Z" fill="#d5d3d3"/><path d="M562.44 385.88L562.87 385.98L562.17 385.72L562.44 385.88Z" fill="#d5d3d3"/><path d="M684.40 389.76L684.66 389.93L684.45 389.99L684.40 389.76Z" fill="#d5d3d3"/><path d="M685.52 389.26L685.74 389.43L685.58 389.54L685.52 389.26Z" fill="#d5d3d3"/><path d="M641.01 357.32L641.28 357.25L640.95 357.18L641.01 357.32Z" fill="#d5d3d3"/><path d="M645.57 363.36L646.43 363.30L645.95 363.06L645.57 363.36Z" fill="#d5d3d3"/><path d="M659.26 356.45L659.86 356.32L659.69 354.95L659.10 355.23L659.26 356.45Z" fill="#d5d3d3"/><path d="M659.32 354.81L659.80 353.75L659.64 354.81L659.32 354.81Z" fill="#d5d3d3"/><path d="M661.36 357.25L663.08 356.92L662.81 357.97L661.36 357.25Z" fill="#d5d3d3"/><path d="M667.32 358.88L668.82 358.94L667.86 359.13L667.32 358.88Z" fill="#d5d3d3"/><path d="M672.05 359.26L673.23 358.68L672.90 359.13L672.05 359.26Z" fill="#d5d3d3"/><path d="M669.47 354.04L670.00 352.96L671.08 351.11L672.69 352.60L674.30 352.01L675.91 352.96L676.99 354.74L674.03 354.74L671.35 354.95L669.74 355.09L669.47 354.04Z" fill="#ffffff"/><path d="M679.94 353.68L681.01 351.11L683.16 350.88L683.44 352.63L683.16 354.39L683.70 356.45L683.16 357.78L681.55 357.51L681.01 356.45L681.28 355.43L679.94 353.68Z" fill="#ffffff"/><path d="M653.73 353.39L656.36 354.04" fill="none"/><path d="M649.87 354.39L651.21 354.39L650.67 357.45" fill="none"/><path d="M658.73 353.11L658.19 351.18L659.00 349.16L658.03 348.76L656.42 347.29" fill="none"/><path d="M658.19 351.18L660.34 350.88L662.00 351.11L662.00 351.86" fill="none"/><path d="M659.00 349.16L661.68 349.56L663.78 349.48L666.84 349.16L667.59 346.70L667.05 344.61" fill="none"/><path d="M662.22 345.05L662.59 347.54L663.29 347.95L664.80 348.76" fill="none"/><path d="M666.84 349.16L666.51 350.11L665.44 351.48L663.56 351.11" fill="none"/><path d="M665.44 351.48L666.78 352.82L668.41 352.57L670.00 352.96" fill="none"/><path d="M666.78 352.82L666.78 354.74L665.17 354.53" fill="none"/><path d="M668.66 354.53L667.05 354.88L665.98 355.23" fill="none"/><path d="M663.29 352.23L664.90 352.23L665.44 353.68L666.78 354.18" fill="none"/><path d="M667.05 344.61L669.20 344.96L669.74 343.14L670.00 341.43L669.74 339.71" fill="none"/><path d="M667.59 346.70L669.75 346.82L671.88 346.45L674.03 348.36L676.18 348.76L676.18 349.95L675.11 350.73L674.84 351.93" fill="none"/><path d="M666.51 350.11L668.17 349.80L669.84 349.56L670.81 351.11" fill="none"/><path d="M667.75 342.00L669.74 341.71" fill="none"/><path d="M669.74 339.20L670.81 338.14L670.56 335.76L669.74 333.53L670.17 331.77L670.31 329.98L670.27 328.17L671.35 326.68" fill="none"/><path d="M662.22 330.28L664.63 328.89L665.44 328.17L668.12 328.89L669.74 328.17L670.27 326.98" fill="none"/><path d="M661.57 342.67L661.14 340.23L661.31 337.59L662.49 334.74L663.51 333.02L663.81 331.05L664.37 329.17" fill="none"/><path d="M668.66 354.53L669.74 354.39L670.17 355.09" fill="none"/><path d="M676.99 354.74L678.33 355.09L680.48 354.53L679.94 353.68" fill="none"/><path d="M678.60 356.11L678.33 357.78L677.25 357.78L674.30 358.30" fill="none"/><path d="M678.33 357.78L679.40 359.07L679.13 360.33L680.48 362.16" fill="none"/><path d="M677.25 357.78L676.72 359.38L675.64 360.82L674.03 360.95L673.76 359.83" fill="none"/><path d="M675.64 360.82L674.57 361.25L673.50 362.47" fill="none"/><path d="M676.72 359.38L677.96 361.28L679.67 362.76L680.48 362.16" fill="none"/><path d="M679.67 362.76L681.01 363.95L681.82 365.11" fill="none"/><path d="M682.25 365.40L684.50 366.42L684.24 367.94L682.62 368.49L682.62 370.13" fill="none"/><path d="M678.87 371.75L679.40 369.32L680.98 368.78L682.62 368.49" fill="none"/><path d="M675.64 367.10L677.79 369.32L679.40 369.32" fill="none"/><path d="M683.16 357.78L684.24 357.12L685.76 357.89L687.46 358.10L687.46 359.07L688.53 358.75L690.41 357.51L691.22 357.45L692.83 357.91L694.17 356.11" fill="none"/><path d="M687.46 358.10L687.13 360.13L687.46 362.16L687.99 362.47L690.41 362.41L690.41 364.88" fill="none"/><path d="M692.83 357.91L693.10 360.01L692.02 360.95L692.29 362.76L692.83 363.42" fill="none"/><path d="M683.16 354.39L684.24 352.23L686.38 351.86L687.46 352.96L689.07 353.32L690.14 354.39L692.83 354.04L694.98 355.23" fill="none"/><path d="M684.24 352.23L683.16 350.88" fill="none"/><path d="M681.01 351.11L682.62 349.95L684.24 347.95L685.89 348.12L687.46 347.54L687.73 346.27L689.90 345.29L691.75 343.79L694.44 345.41L696.05 344.96L697.66 347.54L699.27 347.54L701.69 349.08" fill="none"/><path d="M701.69 349.08L704.10 347.95L705.62 347.09L707.33 346.70L709.07 346.98L710.55 347.95L712.70 348.76L714.29 348.39L715.92 348.36L717.69 348.68" fill="none"/><path d="M690.14 354.39L691.75 355.09L692.83 355.77L694.44 355.77" fill="none"/><path d="M709.31 366.54L709.47 369.04L711.09 369.04L711.89 369.59L712.43 371.22L711.62 372.55L710.98 373.14" fill="none"/><path d="M707.59 365.63L708.67 367.94L709.21 368.77" fill="none"/><path d="M708.94 367.04L708.40 369.32L707.59 370.13L707.70 371.75L707.97 373.35" fill="none"/><path d="M708.67 371.48L710.01 371.05L711.62 371.75" fill="none"/><path d="M704.10 367.10L704.37 365.68L705.18 365.97" fill="none"/><path d="M702.49 366.82L702.49 364.59" fill="none"/><path d="M697.71 362.88L699.81 363.71" fill="none"/><path d="M710.23 376.61L708.56 375.20" fill="none"/><path d="M713.23 377.82L715.46 377.34L717.53 376.40" fill="none"/><path d="M725.05 379.38L726.82 379.70L728.59 380.16L730.42 379.96L730.01 381.64L730.42 383.32" fill="none"/><path d="M650.14 363.54L652.02 362.16L653.89 360.95L653.79 359.07" fill="none"/><path d="M650.03 363.77L647.72 363.60" fill="none"/><path d="M650.03 363.77L652.12 365.11L653.87 365.98L655.24 367.38L656.85 368.49L658.23 367.57L659.65 366.71L661.14 365.97L662.22 366.37L664.06 366.72L665.91 367.05L667.59 367.94L667.59 366.87" fill="none"/><path d="M659.26 362.16L659.47 363.83L660.07 365.40L661.14 365.97" fill="none"/><path d="M668.12 361.13L668.26 363.03L667.96 364.92L668.12 366.82L670.26 366.99L672.39 367.09L674.52 366.82" fill="none"/><path d="M667.59 367.94L667.59 370.41L667.05 372.29L666.51 373.35L668.11 374.41L669.20 375.99L671.35 376.77" fill="none"/><path d="M645.57 367.38L647.72 367.10L648.26 365.97L650.03 363.77" fill="none"/><path d="M645.73 372.07L648.09 370.95L648.79 370.41L651.75 370.41L651.75 367.94L652.12 365.11" fill="none"/><path d="M651.75 370.41L652.55 371.75L654.70 370.78L656.85 371.48L656.85 368.49" fill="none"/><path d="M656.85 371.48L658.44 371.82L660.07 371.75L662.22 371.48L662.89 369.77L663.02 367.94L662.22 366.37" fill="none"/><path d="M662.22 371.48L662.49 373.35L663.02 374.67L662.49 376.25L663.29 377.45L664.37 377.56" fill="none"/><path d="M666.51 373.35L664.63 374.14L663.29 374.67" fill="none"/><path d="M669.20 375.99L670.54 376.25L671.08 378.08L670.54 379.38L670.81 380.95L670.54 382.00L671.08 383.06L670.00 383.06L669.74 384.65L668.12 384.38L666.51 385.45L666.51 387.88" fill="none"/><path d="M674.52 366.82L674.34 369.01L674.30 371.22L672.96 373.62L673.50 375.99L675.32 376.25L677.15 376.51L677.25 379.12" fill="none"/><path d="M677.15 376.51L679.40 374.41L680.48 374.41L678.06 372.55" fill="none"/><path d="M674.30 371.22L675.91 370.95L677.52 371.91" fill="none"/><path d="M671.35 376.77L672.69 376.25L673.50 375.99" fill="none"/><path d="M671.08 378.08L672.96 377.82L672.96 379.12L674.84 380.43L675.80 381.11" fill="none"/><path d="M670.81 380.95L672.96 379.12" fill="none"/><path d="M670.54 382.00L672.96 383.58L673.23 384.65L673.50 385.98L674.84 384.65L676.45 384.11" fill="none"/><path d="M672.96 383.58L672.42 385.98L670.81 387.07L669.74 387.61" fill="none"/><path d="M666.51 387.88L668.12 388.05L669.74 387.61L671.88 387.34L672.42 390.38L671.51 390.61L670.27 390.49L668.66 391.80L668.12 392.49L665.44 391.98L665.44 390.38L665.98 388.16L667.21 387.94" fill="none"/><path d="M661.04 387.88L663.25 387.76L665.44 388.05L665.98 388.16" fill="none"/><path d="M665.44 391.98L665.44 394.14L663.56 394.14" fill="none"/><path d="M671.88 387.34L673.01 389.04L673.76 390.95L672.37 392.67" fill="none"/><path d="M661.25 381.74L661.68 380.95L664.37 380.69L664.37 377.56" fill="none"/><path d="M659.80 377.45L660.77 377.45L662.22 377.45L663.29 377.45" fill="none"/><path d="M659.26 376.25L661.14 374.94L662.49 373.35" fill="none"/><path d="M653.20 375.99L653.09 372.98L654.70 372.82" fill="none"/><path d="M655.24 375.41L654.97 372.82" fill="none"/><path d="M656.15 375.30L656.58 372.55" fill="none"/><path d="M650.40 376.30L650.14 374.41L649.06 374.14L648.52 374.94" fill="none"/><path d="M647.99 374.72L647.45 373.62L648.79 372.29L650.14 372.55L652.02 373.35L653.09 372.98" fill="none"/><path d="M646.65 372.82L647.72 372.02L648.09 370.95" fill="none"/><path d="M616.04 372.07L616.04 374.41L618.45 375.36L618.72 378.08L617.11 380.69L615.23 379.28L613.35 378.60L612.33 377.66" fill="none"/><path d="M622.48 374.14L621.94 375.99L620.33 376.51L618.72 378.08" fill="none"/><path d="M624.09 375.46L624.63 377.56L626.78 377.56" fill="none"/><path d="M617.11 380.69L616.95 382.54L617.11 384.38L617.65 385.18L617.65 386.79L616.95 388.32" fill="none"/><path d="M611.58 380.38L612.81 380.17L614.43 379.12L615.23 379.28" fill="none"/><path d="M617.65 385.18L619.80 383.85L622.21 385.72L623.55 387.34L623.55 389.26L621.41 390.66L619.26 390.38L617.92 391.23" fill="none"/><path d="M623.55 389.26L624.21 390.99L625.43 392.38L624.09 395.04L625.97 397.19" fill="none"/><path d="M621.41 390.66L623.55 391.52L625.43 392.38" fill="none"/><path d="M617.92 391.23L617.66 393.13L617.38 395.04L617.25 397.33L616.30 399.42L615.93 401.27L616.11 403.12L616.30 404.97L615.91 406.89L616.04 408.84L617.65 410.50" fill="none"/><path d="M587.74 349.64L588.65 349.16L590.32 349.46L591.99 349.56L593.66 348.72L595.33 349.31L597.00 349.59L598.67 348.84L600.34 349.17L602.01 348.86L603.69 349.16L606.64 349.95L609.32 351.11L610.40 352.01L610.40 354.39L612.28 353.47L613.89 352.96L614.59 352.23L616.30 352.23L617.54 350.42L618.29 350.73L618.72 352.38L617.11 353.18L616.79 354.60L614.96 355.36L614.16 356.79L613.89 357.78L614.16 358.75L613.08 359.38L612.28 360.01L611.20 361.25L610.99 362.16L611.69 364.24L611.53 364.99L610.77 364.53L610.29 363.06L609.75 362.23L608.89 362.35L607.44 361.86L606.58 362.04L606.75 362.76L605.56 362.47L604.22 362.35L603.69 362.65L602.50 363.65L602.50 364.59L601.48 364.30L600.25 362.29L599.39 362.76L598.48 362.16L597.51 361.07L596.60 361.38L595.09 361.38L593.05 360.64L591.82 360.64L591.07 359.70L589.94 359.32L589.24 358.04L588.92 357.25L588.22 355.91L587.90 354.39L588.11 351.33L587.74 349.64Z" fill="#cc3221"/><path d="M578.98 327.28L577.21 326.38L575.22 326.22L573.58 325.88L572.12 325.02L570.50 324.63L568.78 325.90L566.79 327.88L565.45 329.17L567.44 331.09L566.00 332.00L564.48 332.78L566.36 334.02L568.24 334.02L566.10 335.91L565.45 337.59L567.71 339.20L569.85 340.63L570.39 340.33L569.22 342.11L567.71 343.61L566.36 344.52L569.32 343.33L572.00 341.71L573.08 339.71L574.42 339.30L576.30 338.67L578.98 339.20L581.13 340.73L581.94 341.91L583.28 343.88L584.08 343.79L582.74 341.62L581.13 340.23L580.06 339.09L578.98 338.88L579.18 337.22L578.70 335.57L579.17 333.91L579.07 332.25L578.83 330.60L578.59 328.94L578.98 327.28Z" fill="#cc3221"/><path d="M694.17 356.11L694.98 355.23L697.66 354.04L697.93 352.23L699.00 352.01L699.27 350.57L700.61 350.65L701.69 349.08L703.03 350.11L703.57 351.48L704.64 352.30L706.52 353.90L708.94 353.97L711.09 354.67L713.77 353.97L714.74 353.18L714.31 352.38L715.92 352.01L717.80 351.03L719.03 350.95L718.07 349.95L717.69 348.68L718.87 348.12L719.41 346.19L720.48 345.41L722.36 346.02L723.17 348.36L724.78 349.32L726.93 349.72L726.12 352.23L725.05 353.75L724.24 354.11L723.44 354.39L721.56 355.77L719.95 355.16L720.21 356.45L717.96 356.45L718.60 357.65L720.48 357.78L718.87 359.07L719.68 360.95L720.21 362.16L718.87 364.53L717.26 366.37L715.77 367.25L714.04 367.38L712.70 367.10L712.00 366.31L710.28 366.48L709.31 366.54L708.94 367.04L707.59 365.63L707.11 365.74L707.70 363.65L707.06 363.18L706.25 362.53L704.10 363.48L702.76 363.30L701.96 363.42L700.35 363.00L698.47 361.92L697.12 360.64L696.85 359.38L696.48 358.75L695.24 357.91L694.17 356.11Z" fill="#f0a92c"/><path d="M691.32 365.85L692.29 364.82L692.83 363.42L694.44 362.16L694.71 360.64L694.55 359.38L696.48 358.75L696.85 359.38L697.12 360.64L698.47 361.92L697.71 362.88L699.81 363.71L701.96 364.18L701.96 363.42L702.76 364.06L704.10 363.48L706.79 363.24L705.72 364.41L705.18 365.97L704.64 366.54L704.10 365.40L702.49 364.59L702.22 366.82L701.15 367.94L699.44 369.12L697.82 370.41L697.66 373.09L696.32 374.41L695.51 373.35L694.66 371.82L694.17 370.13L693.79 367.38L692.29 366.54L691.32 365.85Z" fill="#f0a92c"/></g><rect x="780.8" y="337.0" width="14.6" height="32.4" rx="1" fill="url(#scaleg)" stroke="#d9c9a0" stroke-width="0.3"/><text x="788.4" y="331.2" text-anchor="middle" style="font-family:'Liberation Sans', sans-serif;font-size:8.2px;font-style:italic" fill="#333">1</text><text x="788.4" y="381.6" text-anchor="middle" style="font-family:'Liberation Sans', sans-serif;font-size:8.2px;font-style:italic" fill="#333">3</text><circle cx="874" cy="424" r="9" fill="#000" opacity="0.05"/><circle cx="874" cy="423.8" r="8" fill="#666"/><circle cx="890" cy="428" r="11.4" fill="#e0241b"/><rect x="0" y="421" width="908" height="1" fill="#000"/></svg></body></html>
